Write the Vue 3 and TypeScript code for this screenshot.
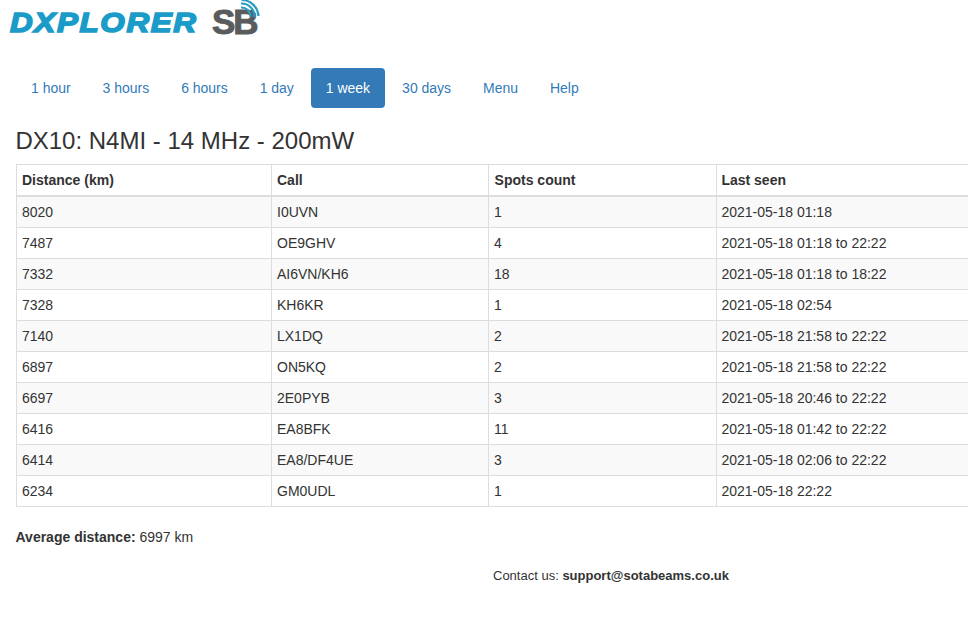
<script setup lang="ts">
const tabs: string[] = ['1 hour', '3 hours', '6 hours', '1 day', '1 week', '30 days', 'Menu', 'Help']
const active = '1 week'
const rows: [string, string, string, string][] = [
  ['8020', 'I0UVN', '1', '2021-05-18 01:18'],
  ['7487', 'OE9GHV', '4', '2021-05-18 01:18 to 22:22'],
  ['7332', 'AI6VN/KH6', '18', '2021-05-18 01:18 to 18:22'],
  ['7328', 'KH6KR', '1', '2021-05-18 02:54'],
  ['7140', 'LX1DQ', '2', '2021-05-18 21:58 to 22:22'],
  ['6897', 'ON5KQ', '2', '2021-05-18 21:58 to 22:22'],
  ['6697', '2E0PYB', '3', '2021-05-18 20:46 to 22:22'],
  ['6416', 'EA8BFK', '11', '2021-05-18 01:42 to 22:22'],
  ['6414', 'EA8/DF4UE', '3', '2021-05-18 02:06 to 22:22'],
  ['6234', 'GM0UDL', '1', '2021-05-18 22:22'],
]
</script>

<template>
  <div class="page">
    <header class="logo">
      <span class="dx">DXPLORER</span>
      <span class="sb">SB<svg class="waves" width="24" height="24" viewBox="0 0 24 24" fill="none" stroke="#2a9cc4" stroke-width="2.2"><path d="M3 7.500 A9 9 0 0 1 12.500 17" /><path d="M3 3.500 A13 13 0 0 1 16.500 17" /><path d="M3.500 0 A17 17 0 0 1 20.500 16" /></svg></span>
    </header>
    <nav class="pills">
      <a v-for="t in tabs" :key="t" class="pill" :class="{ on: t === active }">{{ t }}</a>
    </nav>
    <h3 class="title">DX10: N4MI - 14 MHz - 200mW</h3>
    <table class="grid">
      <colgroup>
        <col class="c1" /><col class="c2" /><col class="c3" /><col class="c4" />
      </colgroup>
      <thead>
        <tr><th>Distance (km)</th><th>Call</th><th>Spots count</th><th>Last seen</th></tr>
      </thead>
      <tbody>
        <tr v-for="r in rows" :key="r[0]">
          <td v-for="(c, i) in r" :key="i">{{ c }}</td>
        </tr>
      </tbody>
    </table>
    <p class="avg"><b>Average distance:</b> 6997 km</p>
    <p class="contact">Contact us: <b>support@sotabeams.co.uk</b></p>
  </div>
</template>

<style>
html, body { margin: 0; overflow: hidden; background: #fff; }
</style>

<style scoped>
.page {
  width: 968px;
  height: 620px;
  overflow: hidden;
  box-sizing: border-box;
  padding: 0 0 0 16px;
  font-family: "Liberation Sans", Arial, sans-serif;
  font-size: 14px;
  line-height: 20px;
  color: #333;
}
.logo {
  height: 68px;
  margin-left: -6px;
  display: flex;
  align-items: flex-start;
}
.dx {
  margin-top: 8px;
  font-size: 28px;
  line-height: 30px;
  font-weight: 700;
  font-style: italic;
  letter-spacing: 1.5px;
  color: #1a9bc8;
  -webkit-text-stroke: 1.6px #1a9bc8;
  transform: scaleX(1.12);
  transform-origin: left center;
  width: 202px;
  white-space: nowrap;
}
.sb {
  position: relative;
  margin-top: 4px;
  font-size: 35px;
  line-height: 36px;
  font-weight: 700;
  letter-spacing: -2px;
  color: #5a5b5d;
  -webkit-text-stroke: 1px #5a5b5d;
}
.waves { position: absolute; left: 26px; top: -4px; }
.pills { display: flex; gap: 2px; }
.pill {
  padding: 10px 15px;
  border-radius: 4px;
  color: #337ab7;
  letter-spacing: -0.02px;
}
.pill.on { background: #337ab7; color: #fff; }
.title {
  margin: 20px 0 10px -0.6px;
  font-size: 24px;
  line-height: 26px;
  font-weight: 500;
}
.grid {
  width: 960px;
  table-layout: fixed;
  border-collapse: collapse;
  border-spacing: 0;
  margin-top: 10px;
}
.c1 { width: 255px; }
.c2 { width: 217px; }
.c3 { width: 228px; }
.c4 { width: 260px; }
th, td {
  border: 1px solid #ddd;
  padding: 5px;
  text-align: left;
  vertical-align: top;
  white-space: nowrap;
  height: 20px;
}
th:last-child, td:last-child { padding-left: 4.4px; }
th:nth-child(3) { padding-left: 5.6px; }
th { font-weight: 700; border-bottom-width: 2px; }
tbody tr:nth-child(odd) { background: #f9f9f9; }
.avg { margin: 20px 0 0 -0.5px; }
.contact { margin: 19px 0 0 477px; font-size: 13px; }
</style>
